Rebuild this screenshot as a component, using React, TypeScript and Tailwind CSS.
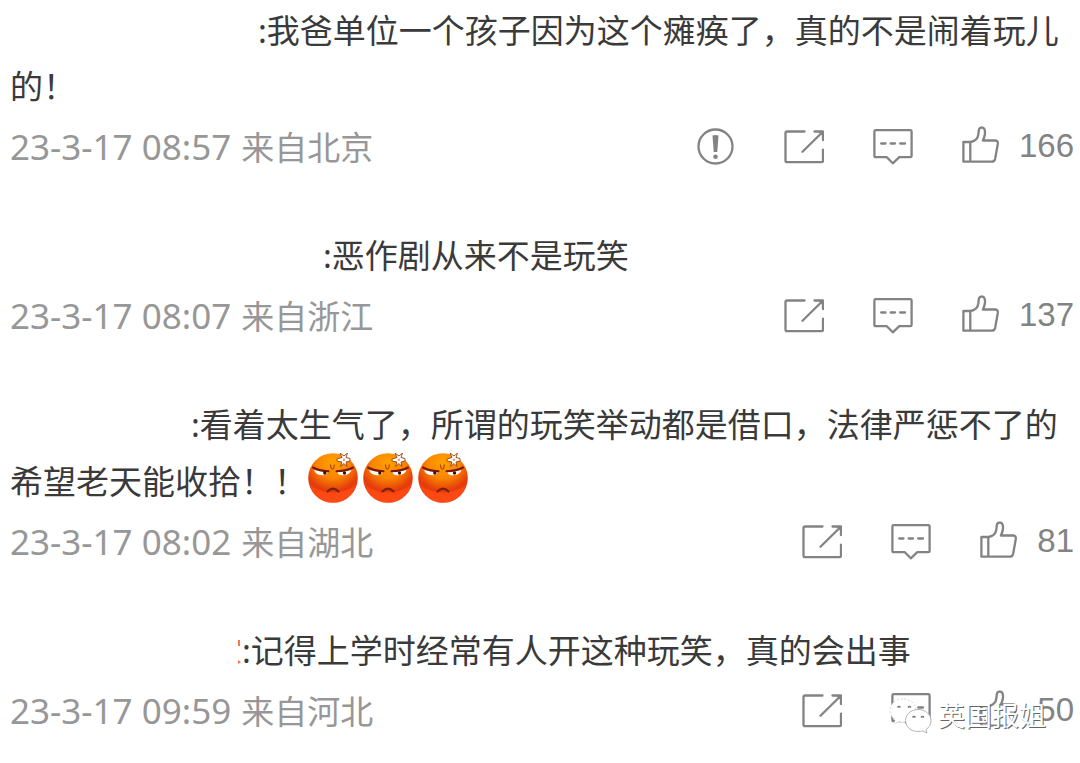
import React from 'react';

const stroke = {
  fill: 'none',
  stroke: 'currentColor',
  strokeWidth: 2.3,
  strokeLinecap: 'round' as const,
  strokeLinejoin: 'round' as const,
};

function ReportIcon() {
  return (
    <svg className="h-10 w-10" viewBox="0 0 40 40" aria-hidden="true">
      <circle cx="20.5" cy="20.5" r="17" {...stroke} />
      <path d="M17.5 9.5Q20.5 8.6 23.5 9.5L22.3 26H18.7Z" fill="currentColor" />
      <circle cx="20.5" cy="30.8" r="2.3" fill="currentColor" />
    </svg>
  );
}

function ShareIcon() {
  return (
    <svg className="h-10 w-10" viewBox="0 0 40 40" aria-hidden="true">
      <g {...stroke}>
        <path d="M20.5 5.5H3.2Q1.5 5.5 1.5 7.2V34.5Q1.5 36.2 3.2 36.2H37.3Q39 36.2 39 34.5V23.7" />
        <path d="M30.5 5.5H39V14M38.3 6.2L18.5 25.7" />
      </g>
      <path d="M33.5 5H39.5V11Z" fill="currentColor" />
    </svg>
  );
}

function CommentIcon() {
  return (
    <svg className="h-10 w-10" viewBox="0 0 40 40" aria-hidden="true">
      <g {...stroke}>
        <path d="M2.7 4.2H37.3Q38.6 4.2 38.6 5.5V29.9Q38.6 31.2 37.3 31.2H26.3L19.8 37.3L13.8 31.2H2.7Q1.4 31.2 1.4 29.9V5.5Q1.4 4.2 2.7 4.2Z" />
        <path d="M8.2 17.5H12.5M17.7 17.5H22M27.2 17.5H32" />
      </g>
    </svg>
  );
}

function LikeIcon() {
  return (
    <svg className="h-10 w-10" viewBox="0 0 40 40" aria-hidden="true">
      <path
        {...stroke}
        d="M1.4 16H8.3C13.3 15.4 15.9 12.5 16.4 8.2L16.8 4.2C17.2 0.9 21.5 0.6 22.6 3.5C23.7 6.8 22.6 10.8 20.9 14.5H33.3Q36.3 14.7 35.8 18L33.1 33Q32.5 35.7 29.8 35.7H1.4ZM8.3 16V35.7"
      />
    </svg>
  );
}

function AngryFace() {
  return (
    <svg className="mr-1 ml-px inline-block h-[50px] w-[50px] align-[-9px]" viewBox="0 0 50 50" role="img" aria-label="怒">
      <defs>
        <radialGradient id="face" cx="50%" cy="18%" r="82%">
          <stop offset="0" stopColor="#ffa000" />
          <stop offset="0.4" stopColor="#fa8500" />
          <stop offset="0.72" stopColor="#e43a0c" />
          <stop offset="1" stopColor="#ff4d18" />
        </radialGradient>
      </defs>
      <circle cx="25" cy="25" r="24.8" fill="url(#face)" />
      <path d="M2 33Q25 46 48 33Q42 49 25 49.6Q8 49 2 33Z" fill="#ff4b14" opacity="0.8" />
      <path d="M6 17Q12 18.500 19.500 18.500Q20 22.200 14 22.200Q7.500 21.800 6 17Z" fill="#fff" />
      <path d="M43.500 17Q37 18.500 29.500 18.500Q29 22.200 35 22.200Q42 21.800 43.500 17Z" fill="#fff" />
      <path d="M5 14.500Q11 17.800 20.500 18.300M45 14.500Q39 17.800 28.500 18.300" fill="none" stroke="#7c1608" strokeWidth="2" strokeLinecap="round" />
      <circle cx="16.800" cy="20" r="1.700" fill="#3a1010" />
      <circle cx="36.500" cy="20" r="1.700" fill="#3a1010" />
      <path d="M22.500 11.500Q22.700 16 24.500 16.200Q26 16 26.300 11.500" fill="none" stroke="#a44403" strokeWidth="1.100" />
      <path d="M19.500 38.500Q25 33 30.500 38.500" fill="none" stroke="#81200b" strokeWidth="2.300" strokeLinecap="round" />
      <path
        d="M32 0L34 4.500L29 6V8L34 9L32.500 13.500L36 10.500L39 13.500L38 9L42 8V5.500L38 4.500L39.500 0L36 3Z"
        fill="#fff"
        stroke="#96421b"
        strokeWidth="0.900"
      />
      <circle cx="35.900" cy="6.700" r="1.300" fill="#ed9b73" />
    </svg>
  );
}

function NameMark() {
  return (
    <svg className="mr-px inline-block h-[26px] w-[3px] align-[-2px]" viewBox="0 0 3 26" aria-hidden="true">
      <path d="M0 1H2V7H0ZM0 21L3 23L0 25Z" fill="#f4764f" />
    </svg>
  );
}

type Comment = {
  indent: string;
  text: string;
  time: string;
  place: string;
  likes: number;
  faces?: number;
  report?: boolean;
  mark?: boolean;
};

const comments: Comment[] = [
  { indent: 'indent-[248px]', text: ':我爸单位一个孩子因为这个瘫痪了，真的不是闹着玩儿的！', time: '23-3-17 08:57', place: '来自北京', likes: 166, report: true },
  { indent: 'indent-[313px]', text: ':恶作剧从来不是玩笑', time: '23-3-17 08:07', place: '来自浙江', likes: 137 },
  { indent: 'indent-[181px]', text: ':看着太生气了，所谓的玩笑举动都是借口，法律严惩不了的希望老天能收拾！！', time: '23-3-17 08:02', place: '来自湖北', likes: 81, faces: 3 },
  { indent: 'indent-[228px]', text: ':记得上学时经常有人开这种玩笑，真的会出事', time: '23-3-17 09:59', place: '来自河北', likes: 50, mark: true },
];

function CommentItem({ item }: { item: Comment }) {
  return (
    <article>
      <p className={`${item.indent} text-[33px] leading-[56px] text-[#3a3a3a]`}>
        {item.mark && <NameMark />}
        {item.text}
        {Array.from({ length: item.faces ?? 0 }, (_, i) => (
          <AngryFace key={i} />
        ))}
      </p>
      <footer className="mt-1 flex h-14 items-center justify-between">
        <div className="flex items-baseline gap-[10px] text-[#979797]">
          <time className="text-[35px] leading-[56px]">{item.time}</time>
          <span className="text-[33px] leading-[56px]">{item.place}</span>
        </div>
        <div className="flex items-center gap-[49px] pb-[3px] text-[#838383]">
          {item.report && (
            <button type="button" aria-label="举报"><ReportIcon /></button>
          )}
          <button type="button" aria-label="转发"><ShareIcon /></button>
          <button type="button" aria-label="评论"><CommentIcon /></button>
          <button type="button" aria-label={`赞 ${item.likes}`} className="flex items-center gap-[17px]">
            <LikeIcon />
            <span className="font-['Liberation_Sans',sans-serif] text-[33px] leading-10">{item.likes}</span>
          </button>
        </div>
      </footer>
    </article>
  );
}

function Watermark() {
  return (
    <div className="pointer-events-none absolute right-[34px] bottom-[30px] flex items-center gap-[6px]">
      <svg className="h-9 w-[43px]" viewBox="0 0 43 36" aria-hidden="true">
        <path d="M14 1C6.500 1 1 5.800 1 12.500C1 16.500 3 19.500 6.200 21.700L5 26L10 23.600Q12 24.200 14 24.200C21.500 24.200 27 19 27 12.500C27 6 21.500 1 14 1Z" fill="#fff" stroke="#ccc" strokeWidth="0.800" strokeDasharray="2 2" />
        <path d="M29 11.500C22 11.500 16.500 16.500 16.500 22.500C16.500 29 22 33.500 29 33.500Q31.500 33.500 33.500 32.800L38 35L37 31.500C40.500 29.300 42 26.300 42 22.500C42 16.500 36.500 11.500 29 11.500Z" fill="#fff" stroke="#aaa" strokeWidth="0.900" />
        <path d="M8.500 9.500Q10 7.500 11.500 9.500M19 9.500Q20.500 7.500 22 9.500M23.500 19.500Q25 17.500 26.500 19.500M32 19.500Q33.500 17.500 35 19.500" fill="none" stroke="#777" strokeWidth="1.300" />
      </svg>
      <span className="text-[27px] leading-9 text-white [text-shadow:1px_1px_0_#666]">英国报姐</span>
    </div>
  );
}

export default function App() {
  return (
    <main className="relative flex min-h-screen flex-col gap-[53px] bg-white pt-[3px] pr-[6px] pb-[25px] pl-[10px] font-['Noto_Sans','Noto_Sans_CJK_SC',sans-serif]" lang="zh-CN">
      {comments.map((item) => (
        <CommentItem key={item.time} item={item} />
      ))}
      <Watermark />
    </main>
  );
}
